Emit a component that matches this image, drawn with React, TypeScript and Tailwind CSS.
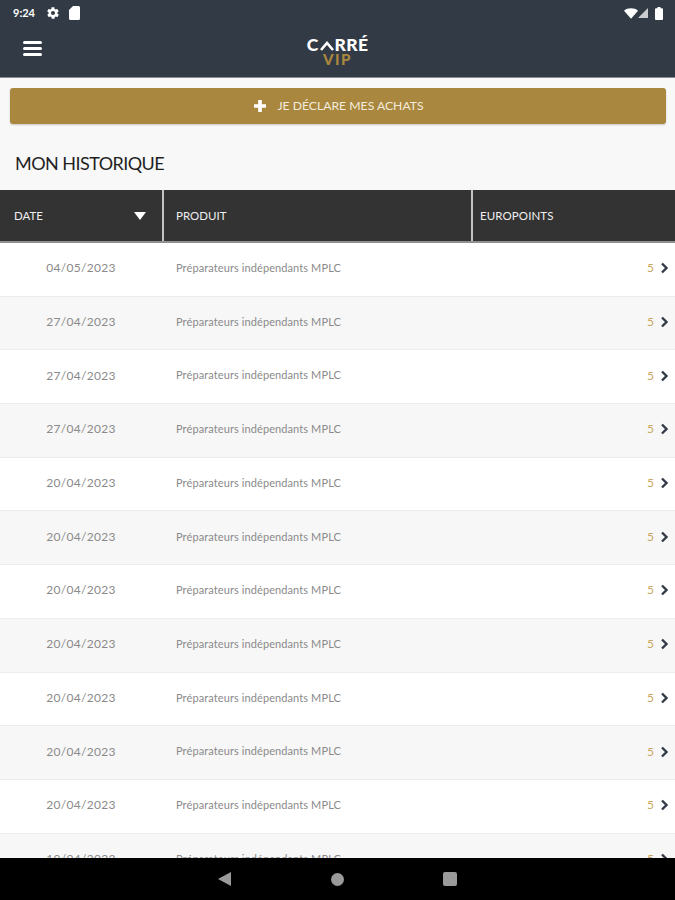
import React from 'react';

const rows = [
  '04/05/2023',
  '27/04/2023',
  '27/04/2023',
  '27/04/2023',
  '20/04/2023',
  '20/04/2023',
  '20/04/2023',
  '20/04/2023',
  '20/04/2023',
  '20/04/2023',
  '20/04/2023',
  '19/04/2023',
];

function StatusBar() {
  return (
    <div className="flex h-[26px] items-center justify-between pl-[13px] pr-[12px] text-white">
      <div className="flex items-center">
        <span className="text-[11px] font-bold">9:24</span>
        <svg className="ml-[11px]" width="14" height="14" viewBox="0 0 24 24" fill="#fff">
          <path
            fillRule="evenodd"
            d="M19.4 13c.1-.3.1-.7.1-1s0-.7-.1-1l2.1-1.6c.2-.2.2-.4.1-.6l-2-3.5c-.1-.2-.4-.3-.6-.2l-2.5 1c-.5-.4-1.1-.7-1.7-1l-.4-2.6c0-.3-.2-.5-.5-.5h-4c-.3 0-.5.2-.5.4l-.4 2.7c-.6.2-1.1.6-1.7 1l-2.5-1c-.2-.1-.5 0-.6.2l-2 3.5c-.1.2-.1.5.1.6L4.6 11c-.1.3-.1.7-.1 1s0 .7.1 1l-2.1 1.6c-.2.2-.2.4-.1.6l2 3.5c.1.2.4.3.6.2l2.5-1c.5.4 1.1.7 1.7 1l.4 2.6c0 .2.2.4.5.4h4c.3 0 .5-.2.5-.4l.4-2.6c.6-.3 1.2-.6 1.7-1l2.5 1c.2.1.5 0 .6-.2l2-3.5c.1-.2.1-.5-.1-.6zM12 15.5a3.5 3.5 0 1 1 0-7 3.5 3.5 0 0 1 0 7z"
          />
        </svg>
        <svg className="ml-[9px]" width="11" height="14" viewBox="0 0 11 14" fill="#fff">
          <path d="M4 0h5.5A1.5 1.5 0 0 1 11 1.5v11a1.5 1.5 0 0 1-1.5 1.5h-8A1.5 1.5 0 0 1 0 12.500V4z" />
        </svg>
      </div>
      <div className="flex items-center">
        <svg width="14" height="11" viewBox="0 0 15 11" fill="#fff">
          <path d="M0 2.500C2 .9 4.600 0 7.500 0S13 .9 15 2.500L7.500 11z" />
        </svg>
        <svg width="10" height="10" viewBox="0 0 11 11" fill="#fff" fillOpacity="0.75">
          <path d="M11 0v11H0z" />
        </svg>
        <svg className="ml-[7px]" width="8" height="13" viewBox="0 0 8 13" fill="#fff">
          <path d="M2.500 0h3v1.200H7a1 1 0 0 1 1 1V12a1 1 0 0 1-1 1H1a1 1 0 0 1-1-1V2.200a1 1 0 0 1 1-1h1.500z" />
        </svg>
      </div>
    </div>
  );
}

function Logo() {
  return (
    <div className="flex flex-col items-center font-['Lato',sans-serif] font-black leading-none">
      <div className="flex h-[14px] items-center text-[17.500px] leading-[14px] tracking-[0.3px] text-white">
        <span>C</span>
        <svg className="mx-[1px]" width="14" height="12" viewBox="0 0 14 12" fill="none" stroke="#fff" strokeWidth="2.6">
          <path d="M1 11 7 4l6 7" />
        </svg>
        <span>RRÉ</span>
      </div>
      <div className="mt-[1px] flex h-[12px] items-center text-[15px] leading-[12px] tracking-[1.5px] text-[#a9873f]">
        <span>VIP</span>
      </div>
    </div>
  );
}

function Row({ date, odd }: { date: string; odd: boolean }) {
  return (
    <div
      className={`flex h-[53.7px] shrink-0 items-center border-b border-[#ececec] pb-[2px] text-[11px] text-[#8a8a8a] ${
        odd ? 'bg-[#f7f7f7]' : 'bg-white'
      }`}
    >
      <div className="w-[162px] shrink-0 text-center text-[12px] tracking-[0.3px]">{date}</div>
      <div className="w-[310px] shrink-0 pl-[14px] tracking-[0.1px]">Préparateurs indépendants MPLC</div>
      <div className="flex flex-1 items-center justify-end pr-[6px]">
        <span className="text-[12px] text-[#c9a760]">5</span>
        <svg className="ml-[6px]" width="9" height="12" viewBox="0 0 9 12" fill="none" stroke="#323b45" strokeWidth="2.400">
          <path d="M2 1.500 6.500 6 2 10.500" />
        </svg>
      </div>
    </div>
  );
}

export default function App() {
  return (
    <div className="flex h-[900px] w-[675px] flex-col overflow-hidden bg-[#f8f8f8] font-['Lato',sans-serif]">
      <div className="h-[78px] shrink-0 border-b border-[#8b8f94] bg-[#323b45]">
        <StatusBar />
        <div className="relative flex h-[51px] items-center justify-center">
          <div className="absolute left-[23px] top-[15px] flex w-[19px] flex-col gap-[3px]">
            <div className="h-[3px] rounded-sm bg-white" />
            <div className="h-[3px] rounded-sm bg-white" />
            <div className="h-[3px] rounded-sm bg-white" />
          </div>
          <Logo />
        </div>
      </div>

      <div className="shrink-0 px-[10px] pt-[10px]">
        <button className="flex h-[36px] w-[656px] items-center justify-center rounded-[3px] bg-[#a9873f] pl-[2px] text-[12.200px] text-[#f3ecdc] shadow-[0_1px_2px_rgba(0,0,0,0.2)]">
          <svg className="mr-[11px]" width="12" height="12" viewBox="0 0 13 13" fill="#fff">
            <path d="M4.500 0h4v4.500H13v4H8.500V13h-4V8.500H0v-4h4.500z" />
          </svg>
          JE DÉCLARE MES ACHATS
        </button>
      </div>

      <h1 className="ml-[15px] mt-[28px] h-[38px] shrink-0 text-[18px] leading-[22px] tracking-[-0.55px] text-[#1f1f1f]">
        MON HISTORIQUE
      </h1>

      <div className="flex h-[53px] shrink-0 items-center border-b-2 border-[#8f8f8f] bg-[#333333] text-[11.500px] text-[#efefef]">
        <div className="flex h-full w-[164px] shrink-0 items-center justify-between border-r-2 border-[#c4c4c4] pl-[14px] pr-[16px]">
          <span>DATE</span>
          <svg width="12" height="8" viewBox="0 0 12 8" fill="#fff">
            <path d="M0 0h12L6 8z" />
          </svg>
        </div>
        <div className="flex h-full w-[309px] shrink-0 items-center border-r-2 border-[#c4c4c4] pl-[12px]">PRODUIT</div>
        <div className="flex-1 pl-[7px] tracking-[0.1px]">EUROPOINTS</div>
      </div>

      <div className="flex min-h-0 flex-1 flex-col overflow-hidden">
        {rows.map((date, i) => (
          <Row key={i} date={date} odd={i % 2 === 1} />
        ))}
      </div>

      <div className="flex h-[42px] shrink-0 items-center bg-black pl-[218px]">
        <svg width="14" height="14" viewBox="0 0 14 14" fill="#9a9a9a">
          <path d="M13 0v14L0 7z" />
        </svg>
        <div className="ml-[99px] h-[13px] w-[13px] rounded-full bg-[#9a9a9a]" />
        <div className="ml-[99px] h-[14px] w-[14px] rounded-[2px] bg-[#9a9a9a]" />
      </div>
    </div>
  );
}
